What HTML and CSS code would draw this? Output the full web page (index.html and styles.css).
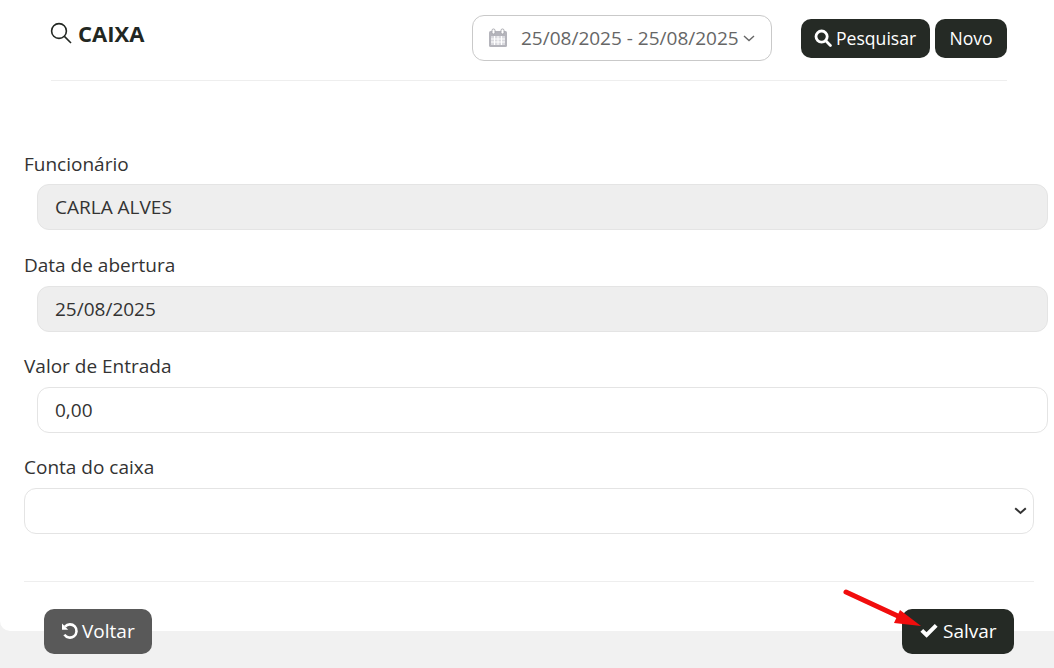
FILE: index.html
```html
<!DOCTYPE html>
<html lang="en">
  <head>
    <meta charset="UTF-8" />
    <meta name="viewport" content="width=device-width, initial-scale=1.0" />
    <title>Caixa</title>
    <link rel="stylesheet" href="styles.css">
  </head>
  <body>
    <div class="card">
      <div class="header">
        <h1 class="title">
          <svg class="title-icon" width="22" height="22" viewBox="0 0 22 22" fill="none" stroke="#222722" stroke-width="1.6">
            <circle cx="9" cy="9" r="7.4" />
            <path d="M14.4 14.4 L21 21" />
          </svg>
          CAIXA
        </h1>
        <div class="header-right">
          <div class="date-range">
            <svg width="20" height="20" viewBox="0 0 20 20" class="cal-icon">
              <rect x="1" y="3" width="18" height="16" rx="1.5" fill="#b4b4bb" />
              <rect x="4" y="1" width="3" height="5" rx="1.4" fill="#fff" stroke="#a8a8ae" />
              <rect x="13" y="1" width="3" height="5" rx="1.4" fill="#fff" stroke="#a8a8ae" />
              <path d="M3 8h14v9H3z" fill="#d9d9de" />
              <path d="M3 11h14M3 14h14M6.5 8v9M10 8v9M13.5 8v9" stroke="#fff" stroke-width="1" />
            </svg>
            <span>25/08/2025 - 25/08/2025</span>
            <svg width="12" height="7" viewBox="0 0 12 7" fill="none" stroke="#666" stroke-width="1.4">
              <path d="M1 1l5 4.5L11 1" />
            </svg>
          </div>
          <div class="header-btns">
            <button class="btn btn-dark btn-search">
              <svg width="18" height="18" viewBox="0 0 18 18" fill="none" stroke="#fff" stroke-width="2.8">
                <circle cx="7.6" cy="7.6" r="5.6" />
                <path d="M11.8 11.8 L16.4 16.4" stroke-linecap="round" />
              </svg>
              Pesquisar
            </button>
            <button class="btn btn-dark btn-new">Novo</button>
          </div>
        </div>
      </div>

      <form class="form">
        <div class="field field-first">
          <label>Funcionário</label>
          <input class="input" type="text" value="CARLA ALVES" disabled />
        </div>
        <div class="field">
          <label>Data de abertura</label>
          <input class="input" type="text" value="25/08/2025" disabled />
        </div>
        <div class="field">
          <label>Valor de Entrada</label>
          <input class="input" type="text" value="0,00" />
        </div>
        <div class="field field-select">
          <label>Conta do caixa</label>
          <select class="input select"></select>
        </div>
      </form>

      <div class="footer">
        <button class="btn btn-gray btn-back">
          <svg width="18" height="18" viewBox="0 0 18 18" fill="none" stroke="#fff" stroke-width="2.6">
            <path d="M4 4.6A6.6 6.6 0 1 1 3.4 12.6" />
            <path d="M1 1.6v6.2h6.2z" fill="#fff" stroke="none" />
          </svg>
          Voltar
        </button>
        <button class="btn btn-dark btn-save">
          <svg width="18" height="15" viewBox="0 0 18 15" fill="none" stroke="#fff" stroke-width="4">
            <path d="M1.8 7.4l4.8 4.6L16.2 2.4" />
          </svg>
          Salvar
        </button>
      </div>
    </div>

    <svg class="arrow" width="90" height="50" viewBox="0 0 90 50">
      <path d="M4 4 L58 29" stroke="#f10d0d" stroke-width="5" stroke-linecap="round" />
      <path d="M58 22 L79 38 L52 35 Z" fill="#f10d0d" />
    </svg>
  </body>
</html>
```

FILE: styles.css
```css
* {
  margin: 0;
  padding: 0;
  box-sizing: border-box;
  font-family: "Open Sans", sans-serif;
}
html,
body {
  height: 668px;
  overflow: hidden;
}
body {
  background: #f1f1f1;
  color: #333;
  position: relative;
}
.card {
  height: 631px;
  background: #fff;
  border-bottom-left-radius: 10px;
}
.header {
  display: flex;
  justify-content: space-between;
  align-items: flex-start;
  height: 81px;
  margin: 0 47px 0 51px;
  border-bottom: 1px solid #eee;
}
.title {
  display: flex;
  align-items: center;
  gap: 6px;
  margin-top: 19px;
  margin-left: -1px;
  font-size: 22px;
  font-weight: 700;
  line-height: 28px;
  color: #222722;
}
.header-right {
  display: flex;
  align-items: center;
  gap: 29px;
  margin-top: 15px;
}
.date-range {
  display: flex;
  align-items: center;
  width: 300px;
  height: 46px;
  padding: 0 15px;
  border: 1px solid #c9c9c9;
  border-radius: 12px;
  font-size: 19px;
  color: #666;
}
.cal-icon {
  margin-right: 13px;
}
.date-range span {
  margin-right: 4px;
  white-space: nowrap;
}
.header-btns {
  display: flex;
  gap: 5px;
}
.btn {
  display: flex;
  align-items: center;
  gap: 3px;
  border: 0;
  outline: 0;
  border-radius: 10px;
  color: #fff;
  font-size: 19px;
  cursor: pointer;
}
.btn-dark {
  background: #252a25;
}
.btn-gray {
  background: #595959;
}
.header-btns .btn {
  height: 39px;
  font-size: 17.6px;
}
.btn-search {
  width: 129px;
  padding-left: 13px;
  gap: 4px;
}
.btn-new {
  width: 72px;
  justify-content: center;
}
.form {
  padding: 71px 6px 0 24px;
}
.field {
  margin-bottom: 22px;
}
.field-first {
  margin-bottom: 23px;
}
.field label {
  display: block;
  height: 33px;
  font-size: 19px;
  line-height: 25px;
  color: #333;
}
.field-first label {
  height: 32px;
}
.input {
  display: block;
  width: calc(100% - 13px);
  height: 46px;
  margin-left: 13px;
  padding: 0 17px;
  border: 1px solid #e4e4e4;
  border-radius: 12px;
  background: #fff;
  font-size: 19px;
  color: #333;
  outline: 0;
}
.input:disabled {
  background: #eee;
  opacity: 1;
}
.field-select {
  padding-bottom: 47px;
  border-bottom: 1px solid #eee;
  margin-right: 14px;
  margin-bottom: 0;
}
.select {
  width: 100%;
  margin-left: 0;
  appearance: none;
  background-image: url("data:image/svg+xml,%3Csvg xmlns='http://www.w3.org/2000/svg' width='13' height='8' viewBox='0 0 13 8' fill='none' stroke='%23333' stroke-width='2'%3E%3Cpath d='M1.2 1.2L6.5 6l5.3-4.8'/%3E%3C/svg%3E");
  background-repeat: no-repeat;
  background-position: right 6px center;
}
.footer {
  display: flex;
  justify-content: space-between;
  margin: 27px 40px 0 44px;
}
.footer .btn {
  height: 45px;
  padding-bottom: 2px;
}
.btn-back {
  width: 108px;
  padding-left: 17px;
}
.btn-save {
  width: 112px;
  padding-left: 18px;
  gap: 5px;
}
.arrow {
  position: absolute;
  left: 842px;
  top: 588px;
}
```
